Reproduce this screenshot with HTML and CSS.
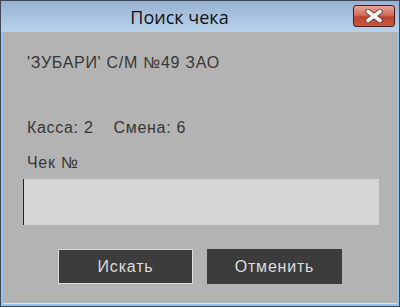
FILE: index.html
```html
<!DOCTYPE html>
<html>
<head>
	<title>Поиск чека</title>
	<link rel="stylesheet" href="styles.css">
</head>
<body>

<div class="window">
	<div class="titlebar">
		<div class="title">Поиск чека</div>
		<div class="close">
			<svg width="22" height="14" viewBox="0 0 22 14">
				<path d="M5 2.5 L17 11.5 M17 2.5 L5 11.5" stroke="#6a4040" stroke-width="5.4" stroke-linecap="round"/>
				<path d="M5 2.5 L17 11.5 M17 2.5 L5 11.5" stroke="#f4f4f4" stroke-width="3.6" stroke-linecap="round"/>
			</svg>
		</div>
	</div>

	<div class="content">
		<div class="label shop">'ЗУБАРИ' С/М №49 ЗАО</div>
		<div class="label info"><span class="kassa">Касса: 2</span><span>Смена: 6</span></div>
		<div class="label check">Чек №</div>
		<div class="field"><span class="caret"></span></div>
		<div class="buttons">
			<div class="btn focused">Искать</div>
			<div class="btn">Отменить</div>
		</div>
	</div>
</div>

</body>
</html>
```

FILE: styles.css
```css
body {margin: 0; padding: 0; font-family: "Liberation Sans", Arial, sans-serif;}
.window {width: 400px; height: 307px; box-sizing: border-box; border: 1px solid #3d4756; background: #8ec6ee; display: flex; flex-direction: column;}
.titlebar {height: 31px; display: flex; align-items: flex-start; background: linear-gradient(#97b1d2, #bad3ec);}
.title {flex: 1; text-align: center; font-family: "Open Sans", "Noto Sans", sans-serif; font-size: 18px; color: #111; line-height: 20px; padding: 6px 0 0 5px;}
.close {width: 42px; height: 22px; margin: 4px 4px 0 0; box-sizing: border-box; border: 1px solid #4a1c1c; border-radius: 3px; background: linear-gradient(#e8a494, #d47060 45%, #bb4430 55%, #c85a40); display: flex; align-items: center; justify-content: center;}
.content {flex: 1; background: #b3b3b3; margin: 0 2px 2px 2px; padding: 22px 18px 0 20px; color: #363636; font-size: 16px; letter-spacing: 0.7px; border-bottom: 1px solid #d8e8f2;}
.label {padding-left: 4px; line-height: 17px;}
.info {margin-top: 48px;}
.kassa {margin-right: 20px;}
.check {margin-top: 18px;}
.field {height: 46px; margin-top: 8px; background: #d6d6d6; display: flex;}
.caret {width: 1px; background: #222;}
.buttons {display: flex; justify-content: center; gap: 14px; margin-top: 24px; margin-left: -2px;}
.btn {width: 135px; height: 35px; box-sizing: border-box; background: #3c3c3c; color: #dcdcdc; font-size: 16px; letter-spacing: 0.8px; display: flex; align-items: center; justify-content: center;}
.btn.focused {border: 1px solid #dddddd;}
```
